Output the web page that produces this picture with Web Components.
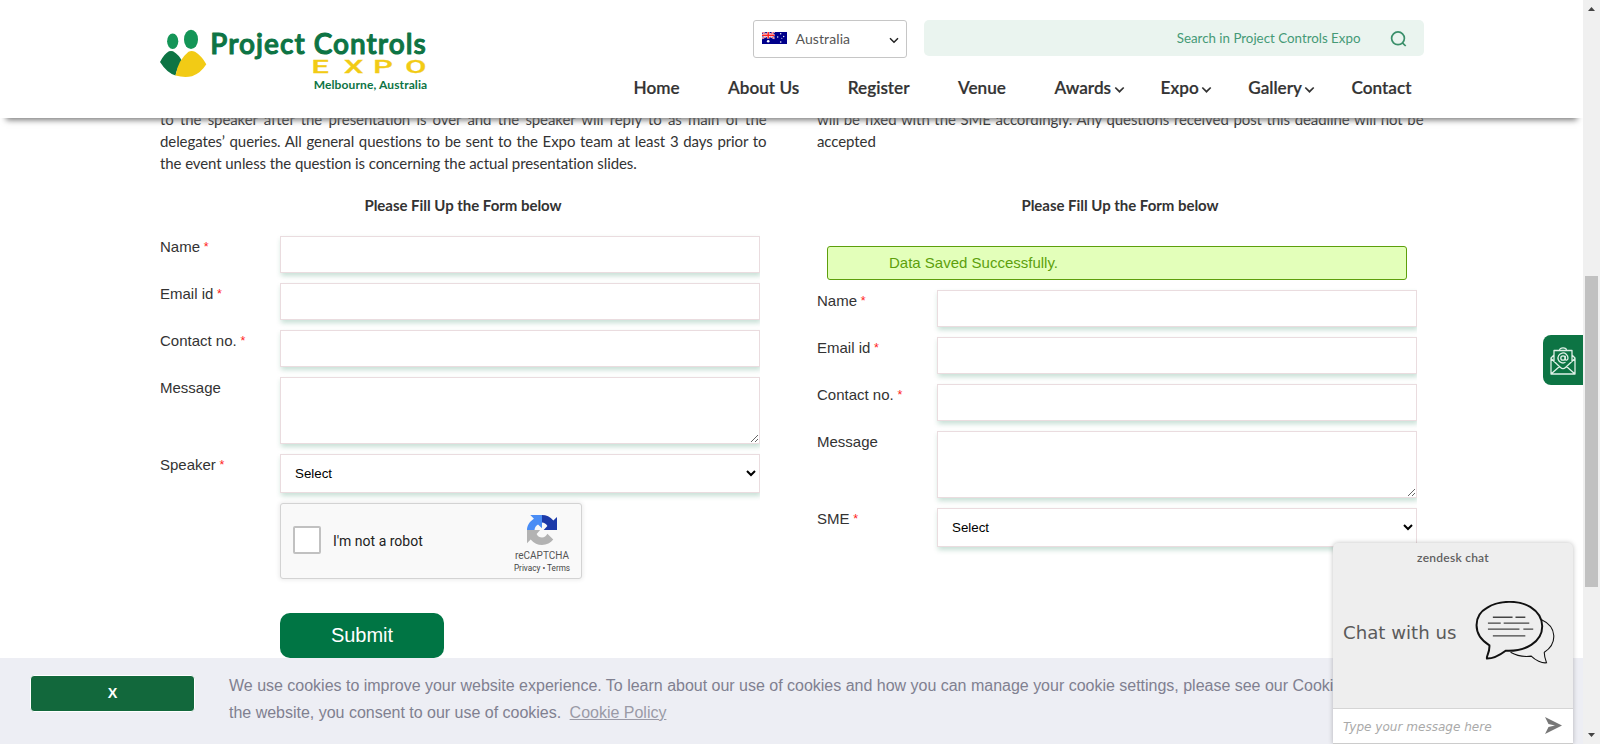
<!DOCTYPE html>
<html lang="en">
<head>
<meta charset="utf-8">
<title>Project Controls Expo</title>
<style>
html,body{margin:0;height:100%;overflow:hidden;background:#fff}
body{font-family:"Liberation Sans",Arial,sans-serif;color:#333}
</style>
</head>
<body>
<expo-page></expo-page>
<script>
const define=(name,html)=>customElements.define(name,class extends HTMLElement{
  constructor(){super();const t=document.createElement('template');
    t.innerHTML=typeof html==='function'?html(this):html;
    this.attachShadow({mode:'open'}).append(t.content.cloneNode(true));}
});

define('expo-logo',`<style>:host{display:block;width:270px;height:70px}svg{display:block}</style>
<svg width="270" height="70" viewBox="158 26 270 70">
<ellipse cx="172.7" cy="41.3" rx="5.6" ry="7.7" fill="#149557"/>
<ellipse cx="191" cy="39.4" rx="7" ry="9.7" fill="#149557"/>
<path d="M160 62Q164 54 169 51.300Q171 50.500 173 51.300Q179 55 182 61Q177 68 175.500 75.500Q167 73 160 62Z" fill="#0d7444"/>
<path d="M175.500 75.500Q178 60 188.500 51.700Q191.500 50.300 195 51.700Q202 56 206.300 64.300Q201 73 192 76.300Q184 78 175.500 75.500Z" fill="#f2cb15"/>
<text x="210.300" y="53.500" font-family="Lato,sans-serif" font-weight="600" font-size="28" textLength="215.500" lengthAdjust="spacing" fill="#0d7444" stroke="#0d7444" stroke-width="1" stroke-linejoin="round">Project Controls</text>
<g transform="translate(0 73) scale(1.7 1)"><text x="183.300 202.300 219.600 238.400" y="0" font-family="Roboto,sans-serif" font-weight="500" font-size="18" fill="#f2cb15" stroke="#f2cb15" stroke-width=".3">EXPO</text></g>
<text x="313.700" y="89" font-family="Lato,sans-serif" font-weight="700" font-size="12" textLength="113.500" fill="#0d7444">Melbourne, Australia</text>
</svg>`);

define('country-picker',`<style>:host{display:flex;box-sizing:border-box;width:154px;height:38px;border:1px solid #c6c6c6;border-radius:3px;align-items:center;padding:0 7px 0 8px;font:14px Lato,sans-serif;letter-spacing:.1px;color:#555}
.f{flex:none;margin-right:8.500px;margin-top:-2px}span{flex:1;padding-bottom:1px}</style>
<svg class="f" width="25" height="12" viewBox="0 0 25 12"><rect width="25" height="12" fill="#00008b"/>
<path d="M0 0L12.500 6.500M12.500 0L0 6.500" stroke="#fff" stroke-width="1.700"/><path d="M0 0L12.500 6.500M12.500 0L0 6.500" stroke="#e8112d" stroke-width=".7"/>
<path d="M6.200 0V6.500M0 3.200H12.500" stroke="#fff" stroke-width="2.600"/><path d="M6.200 0V6.500M0 3.200H12.500" stroke="#f22" stroke-width="1.500"/>
<g fill="#fff"><circle cx="6.200" cy="9.300" r="1.300"/><circle cx="18.700" cy="1.800" r=".7"/><circle cx="15.700" cy="5" r=".7"/><circle cx="21.700" cy="4.500" r=".7"/><circle cx="18.700" cy="10" r=".8"/><circle cx="19.800" cy="6.200" r=".5"/></g></svg>
<span>Australia</span>
<svg width="10" height="7" viewBox="0 0 10 7" style="margin-top:2px"><path d="M1 1.200L5 5.200L9 1.200" fill="none" stroke="#222" stroke-width="1.500"/></svg>`);

define('site-search',`<style>:host{display:flex;box-sizing:border-box;width:500px;height:36px;border-radius:5px;background:#eaf4ef;align-items:center;justify-content:flex-end;padding:0 16px 0 0;font:13.333px Lato,sans-serif;color:#459a76}
svg{margin-left:29.500px;margin-top:2px}span{padding-bottom:1px}</style><span>Search in Project Controls Expo</span>
<svg width="18" height="18" viewBox="0 0 18 18" fill="none" stroke="#3a8f6a" stroke-width="1.700"><circle cx="8" cy="8.300" r="6.400"/><path d="M12.400 12.800L15.700 16"/></svg>`);

define('nav-item',el=>`<style>:host{display:flex;align-items:center;font:600 17.150px/24px Lato,sans-serif;-webkit-text-stroke:.2px #333;color:#333;white-space:nowrap}svg{margin:4px -12.500px 0 2.500px}</style><slot></slot>
${el.hasAttribute('menu')?'<svg width="11" height="8" viewBox="0 0 11 8"><path d="M1.300 1.500L5.500 5.700L9.700 1.500" fill="none" stroke="#333" stroke-width="1.700"/></svg>':''}`);

define('site-header',`<style>:host{display:block;position:relative;z-index:2;height:118px;background:#fff;box-shadow:0 8px 6px -6px #777}
.w{display:flex;justify-content:space-between;padding:20px 159px 0 158px}
expo-logo{margin-top:6px}
.t{display:flex;gap:17px;justify-content:flex-end}
nav{display:flex;justify-content:space-between;width:778px;margin:18px 12.500px 0 0}
.r{display:flex;flex-direction:column;align-items:flex-end}</style>
<div class="w"><expo-logo></expo-logo><div class="r"><div class="t"><country-picker></country-picker><site-search></site-search></div>
<nav><nav-item>Home</nav-item><nav-item>About Us</nav-item><nav-item>Register</nav-item><nav-item>Venue</nav-item><nav-item menu>Awards</nav-item><nav-item menu>Expo</nav-item><nav-item menu>Gallery</nav-item><nav-item>Contact</nav-item></nav></div></div>`);

define('form-row',el=>{
  const k=el.getAttribute('kind')||'text';
  const c=k==='area'?'<textarea></textarea>':k==='select'?'<select><option>Select</option></select>':'<input type="text">';
  return `<style>:host{display:grid;grid-template-columns:120px 480px;margin-bottom:10px;font-size:15px}
label{padding-top:2px;line-height:18px;white-space:nowrap}i{color:#f22;font-style:normal;font-size:12.500px;vertical-align:1px;line-height:1;margin-left:-.500px}
.c{display:flex;clip-path:inset(-4px 0 -14px -5px)}
input,textarea,select{box-sizing:border-box;display:block;width:480px;height:37px;margin:0;border:1px solid #eadcdf;border-radius:0;background:#fff;box-shadow:1px 3px 5px rgba(0,115,70,.22);padding:0 10px;font:13.333px "Liberation Sans",Arial,sans-serif;color:#000}
textarea{height:67px;resize:both}select{height:39px}</style>
<label>${el.getAttribute('label')}${el.hasAttribute('required')?' <i>*</i>':''}</label><div class="c">${c}</div>`;});

define('status-note',`<style>:host{display:block;box-sizing:border-box;height:34px;margin:0 17px 10px 10px;padding-left:61px;border:1px solid #5d9f0c;border-radius:3px;background:#e3ffba;color:#5d9f0c;font-size:15px;line-height:32px}</style><slot></slot>`);

define('robot-check',`<style>:host{display:flex;box-sizing:border-box;width:302px;height:76px;border:1px solid #d3d3d3;border-radius:3px;background:#f9f9f9;box-shadow:0 0 4px 1px rgba(0,0,0,.08);align-items:center;padding:0 9px 0 12px;font-family:Roboto,sans-serif;color:#222}
b{box-sizing:border-box;width:28px;height:28px;border:2px solid #c1c1c1;border-radius:2px;background:#fff;margin-right:12px;margin-top:-2px}
.l{flex:1;font-size:14px}.r{display:flex;flex-direction:column;align-items:center;width:60px;color:#555;padding-top:6px}
.n{font-size:10px;line-height:12px;margin-top:5px}.p{font-size:8.200px;line-height:10px;margin-top:1px;white-space:nowrap;color:#444}</style>
<b></b><span class="l">I'm not a robot</span>
<div class="r"><svg width="30" height="30" viewBox="0 0 64 64"><path d="M64 32v-28l-7.800 7.800C49.500 3.700 41 0 32 0v16c4.500 0 9 2.500 11.500 7.500L35.500 32Z" fill="#1c3aa9"/><path d="M32 0H7l7.800 7.800C4.500 14.500 0 23 0 32h16c.5-5 3-9.500 7.500-11.500L32 28Z" fill="#4a8df5"/><path d="M0 32v28l7.800-7.800C15 60.500 23 64 32 64c10 0 18.500-4 24-11.500L43.500 40C41 45 37 48 32 48c-5 0-8.500-2-11.500-7.500L28 32Z" fill="#b3b3b3"/></svg>
<span class="n">reCAPTCHA</span><span class="p">Privacy • Terms</span></div>`);

define('submit-button',`<style>:host{display:flex;width:164px;height:45px;border-radius:10px;background:#007544;color:#fff;font-size:20px;align-items:center;justify-content:center}</style><slot></slot>`);

define('enquiry-column',`<style>:host{display:block;width:607px}
.p{font:15px/22px Lato,sans-serif;letter-spacing:-.085px;text-align:justify;height:66px;width:606.500px}
h3{font:700 15px/22px Lato,sans-serif;letter-spacing:-.03px;text-align:center;margin:20px 1px 0 0}</style>
<div class="p"><slot name="intro"></slot></div><h3>Please Fill Up the Form below</h3><slot></slot>`);

define('cookie-bar',`<style>:host{display:flex;position:absolute;z-index:3;left:0;right:0;bottom:0;height:86px;background:#edeef4;color:#808090;font-size:16px;letter-spacing:-.01px;line-height:27px}
b{flex:none;box-sizing:border-box;width:165px;height:37px;border:1px solid #fff;border-radius:4px;margin:17px 0 0 30px;background:#12683c;color:#fff;font:700 14.400px/35px "Liberation Sans",sans-serif;text-align:center}
p{margin:14px 0 0 34px;white-space:nowrap}a{color:#9a9aa6;text-decoration:underline;margin-left:4px}</style>
<b>X</b><p>We use cookies to improve your website experience. To learn about our use of cookies and how you can manage your cookie settings, please see our Cookie<br>the website, you consent to our use of cookies. <a>Cookie Policy</a></p>`);

define('mail-tab',`<style>:host{display:flex;position:absolute;z-index:3;right:0;top:335px;width:40px;height:50px;border-radius:8px 0 0 8px;background:#0d7444;align-items:center;justify-content:center}</style>
<svg width="26" height="29" viewBox="0 0 26 29" fill="none" stroke="#dff0e7" stroke-width="1.300" stroke-linejoin="round"><path d="M4 16V4.500H22V16M9.500 4.500C9.500 1 16.500 1 16.500 4.500M4 9L1 12V28H25V12L22 9M1 12.500L10.500 21.500Q13 23.800 15.500 21.500L25 12.500M1 28L9.500 20.500M25 28L16.500 20.500"/><circle cx="13" cy="12" r="2.200"/><path d="M15.200 9.700V13C15.400 14.800 18 14.300 18 12A5 5 0 1 0 15.500 16.300"/></svg>`);

define('chat-card',`<style>:host{display:flex;flex-direction:column;box-sizing:border-box;position:absolute;z-index:4;left:1333px;top:543px;width:240px;height:201px;border-radius:5px 5px 0 0;background:#eee;box-shadow:0 0 5px rgba(0,0,0,.25);font-family:"DejaVu Sans",sans-serif;color:#5b5b5b}
.z{text-align:center;font:600 12px/16px Lato,sans-serif;letter-spacing:.25px;padding-top:7px;color:#5f5f5f}
.m{flex:1;display:flex;align-items:center;padding:0 18px 10px 10px;font-size:18.150px;justify-content:space-between;white-space:nowrap}
.m svg{margin-top:1px}
.i{box-sizing:border-box;height:36px;display:flex;align-items:center;justify-content:space-between;background:#fff;border-top:1px solid #d5d5d5;border-bottom:1px solid #ccc;padding:0 11px 0 10px;font-size:12.050px;font-style:italic;color:#aaa}</style>
<div class="z">zendesk chat</div>
<div class="m"><span>Chat with us</span><svg width="80" height="63" viewBox="0 0 81 64" fill="none" stroke="#111"><path d="M67.500 19C83 26 84 43 70.300 52C70 56 71.500 60 72.500 62.700C68 63.500 61 60 57 56C49 57 42 55.500 36 52" stroke-width="1.100"/><path d="M14.500 45C-4 34 -1 14 12 7C24 -1 45 -1 56 6C72 16 72 35 57 44.500C50 49 40 51 31 50.500C25 55 19 58.500 12 58.500C11 56 15 53 14.500 45Z" fill="#eee" stroke-width="2"/><path d="M18 16.500H38M41 16.500H51M13 22.500H26M29 22.500H55M13 28.500H45M49 28.500H59M18 35.500H51" stroke="#444" stroke-width="1.300"/></svg></div>
<div class="i"><span style="padding-top:1px">Type your message here</span><svg width="17" height="17" viewBox="0 0 17 17" style="margin-top:-2px"><path d="M0 0L17 8.500L0 17L3.500 10L10 8.500L3.500 7Z" fill="#777"/></svg></div>`);

define('scroll-track',`<style>:host{display:flex;flex-direction:column;align-items:center;width:17px;background:#f0f0f0}svg{flex:none}div{width:13px;height:311px;background:#c1c1c1;margin:259px 0 auto}</style>
<svg width="17" height="17"><path d="M5 11L8.500 7L12 11Z" fill="#444"/></svg><div></div><svg width="17" height="17"><path d="M5 6L8.500 10L12 6Z" fill="#444"/></svg>`);

define('expo-page',`<style>:host{display:flex;width:1600px;height:744px}
main{flex:1;position:relative;overflow:hidden}
.cols{display:flex;gap:50px;margin-top:-10px;padding-left:160px}
.form{margin-top:20px}.form.r{margin-top:30px}submit-button{margin:34px 0 0 120px}robot-check{margin-left:120px}</style>
<main><site-header></site-header>
<div class="cols">
<enquiry-column><span slot="intro">to the speaker after the presentation is over and the speaker will reply to as main of the delegates’ queries. All general questions to be sent to the Expo team at least 3 days prior to the event unless the question is concerning the actual presentation slides.</span>
<div class="form"><form-row label="Name" required></form-row><form-row label="Email id" required></form-row><form-row label="Contact no." required></form-row><form-row label="Message" kind="area"></form-row><form-row label="Speaker" kind="select" required></form-row><robot-check></robot-check><submit-button>Submit</submit-button></div></enquiry-column>
<enquiry-column><span slot="intro">will be fixed with the SME accordingly. Any questions received post this deadline will not be accepted</span>
<div class="form r"><status-note>Data Saved Successfully.</status-note><form-row label="Name" required></form-row><form-row label="Email id" required></form-row><form-row label="Contact no." required></form-row><form-row label="Message" kind="area"></form-row><form-row label="SME" kind="select" required></form-row></div></enquiry-column>
</div>
<cookie-bar></cookie-bar><mail-tab></mail-tab><chat-card></chat-card></main>
<scroll-track></scroll-track>`);
</script>
</body>
</html>
